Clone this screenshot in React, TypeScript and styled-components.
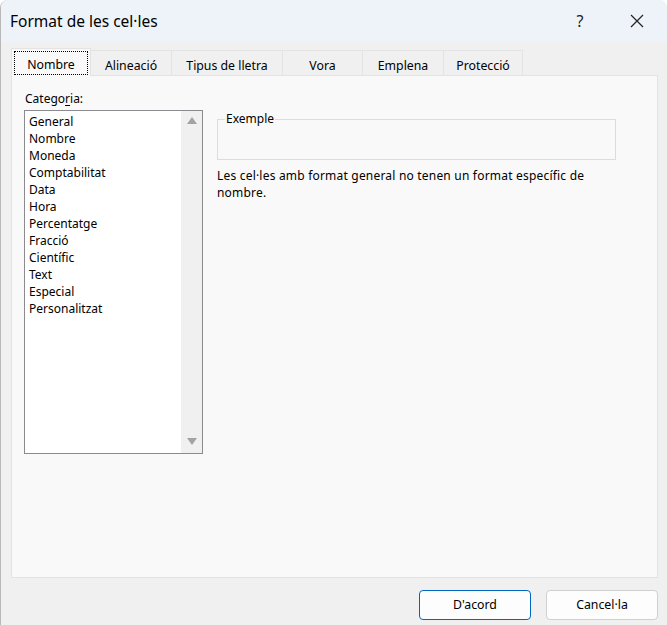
import React from "react";
import styled, { createGlobalStyle } from "styled-components";

const Global = createGlobalStyle`
  html, body { margin: 0; padding: 0; background: #ffffff; }
  * { box-sizing: border-box; }
  #root { width: 667px; height: 625px; }
`;

const FONT = `"Noto Sans", "Open Sans", sans-serif`;

const Window = styled.div`
  width: 667px;
  height: 625px;
  background: #f0f0f0;
  border-top-right-radius: 8px;
  border-top-left-radius: 8px;
  border-left: 1px solid #b8b8b8;
  overflow: hidden;
  display: flex;
  flex-direction: column;
  font-family: ${FONT};
  color: #000;
`;

const TitleBar = styled.div`
  height: 42px;
  flex: none;
  background: #eef3f9;
  display: flex;
  align-items: center;
  padding-left: 9px;
`;

const Title = styled.div`
  font-size: 15.5px;
  flex: 1;
`;

const TitleButton = styled.div<{ $w: number; $gap?: number }>`
  width: ${(p) => p.$w}px;
  margin-left: ${(p) => p.$gap ?? 0}px;
  height: 42px;
  display: flex;
  align-items: center;
  justify-content: center;
  font-size: 16px;
  color: #222;
`;

const Body = styled.div`
  flex: 1;
  display: flex;
  flex-direction: column;
  padding: 6px 9px 0 10px;
`;

const TabStrip = styled.div`
  display: flex;
  align-items: flex-end;
  height: 28px;
  position: relative;
  z-index: 1;
  margin-bottom: -1px;
`;

const Tab = styled.div<{ $w: number; $active?: boolean }>`
  width: ${(p) => p.$w}px;
  height: ${(p) => (p.$active ? 28 : 26)}px;
  margin-left: ${(p) => (p.$active ? 0 : -1)}px;
  border: 1px solid #e3e3e3;
  border-bottom: ${(p) => (p.$active ? "none" : "1px solid #e3e3e3")};
  background: ${(p) => (p.$active ? "#f9f9f9" : "#f0f0f0")};
  display: flex;
  align-items: center;
  justify-content: center;
  font-size: 12.3px;
  padding: ${(p) => (p.$active ? "2px 2px 1px" : "4px 0 0")};
  position: relative;
  z-index: ${(p) => (p.$active ? 2 : 1)};
`;

const Focus = styled.div`
  width: 100%;
  height: 100%;
  border: 1px dotted #000;
  display: flex;
  align-items: center;
  justify-content: center;
  padding-top: 3px;
`;

const Panel = styled.div`
  width: 647px;
  height: 503px;
  background: #f9f9f9;
  border: 1px solid #e3e3e3;
  display: flex;
  padding: 14px 0 0 12px;
  gap: 14px;
`;

const LeftCol = styled.div`
  display: flex;
  flex-direction: column;
  width: 179px;
`;

const Label = styled.div`
  font-size: 12px;
  height: 20px;
  padding-left: 1px;
  u { text-decoration: underline; text-underline-offset: 2px; }
`;

const ListBox = styled.div`
  width: 179px;
  height: 344px;
  border: 1px solid #8a8a8f;
  background: #fff;
  display: flex;
`;

const Items = styled.div`
  flex: 1;
  padding: 2px 0 0 4px;
  display: flex;
  flex-direction: column;
`;

const Item = styled.div`
  font-size: 12px;
  line-height: 17px;
  height: 17px;
`;

const Scroll = styled.div`
  width: 21px;
  background: #f0f0f0;
  display: flex;
  flex-direction: column;
  justify-content: space-between;
  align-items: center;
  padding: 6px 0 8px;
`;

const Arrow = styled.div<{ $down?: boolean }>`
  width: 0;
  height: 0;
  border-left: 5px solid transparent;
  border-right: 5px solid transparent;
  ${(p) =>
    p.$down
      ? "border-top: 7px solid #a3a3a3;"
      : "border-bottom: 7px solid #a3a3a3;"}
`;

const RightCol = styled.div`
  display: flex;
  flex-direction: column;
  padding-top: 22px;
  width: 399px;
`;

const Group = styled.fieldset`
  margin: 0;
  padding: 0;
  height: 48px;
  border: 1px solid #dcdcdc;
  min-width: 0;
`;

const Legend = styled.legend`
  font-size: 12px;
  line-height: 14px;
  margin-left: 7px;
  padding: 0 1px;
`;

const Desc = styled.div`
  margin-top: 7px;
  font-size: 12px;
  line-height: 17px;
  letter-spacing: 0.2px;
  width: 400px;
`;

const Footer = styled.div`
  display: flex;
  justify-content: flex-end;
  gap: 15px;
  padding: 12px 0 0;
`;

const Button = styled.div<{ $primary?: boolean }>`
  width: 112px;
  height: 30px;
  border-radius: 4px;
  border: 1px solid ${(p) => (p.$primary ? "#0067c0" : "#d0d0d0")};
  background: #fdfdfd;
  display: flex;
  align-items: center;
  justify-content: center;
  font-size: 12.3px;
  padding-bottom: 1px;
`;

const items = [
  "General",
  "Nombre",
  "Moneda",
  "Comptabilitat",
  "Data",
  "Hora",
  "Percentatge",
  "Fracció",
  "Científic",
  "Text",
  "Especial",
  "Personalitzat",
];

export default function App() {
  return (
    <>
      <Global />
      <Window>
        <TitleBar>
          <Title>Format de les cel·les</Title>
          <TitleButton $w={40}>?</TitleButton>
          <TitleButton $w={60} $gap={7}>
            <svg width="14" height="14" viewBox="0 0 14 14">
              <path d="M1 1 L13 13 M13 1 L1 13" stroke="#222" strokeWidth="1.2" fill="none" />
            </svg>
          </TitleButton>
        </TitleBar>
        <Body>
          <TabStrip>
            <Tab $w={80} $active>
              <Focus>Nombre</Focus>
            </Tab>
            <Tab $w={82}>Alineació</Tab>
            <Tab $w={112}>Tipus de lletra</Tab>
            <Tab $w={81}>Vora</Tab>
            <Tab $w={82}>Emplena</Tab>
            <Tab $w={80}>Protecció</Tab>
          </TabStrip>
          <Panel>
            <LeftCol>
              <Label>
                Catego<u>r</u>ia:
              </Label>
              <ListBox>
                <Items>
                  {items.map((i) => (
                    <Item key={i}>{i}</Item>
                  ))}
                </Items>
                <Scroll>
                  <Arrow />
                  <Arrow $down />
                </Scroll>
              </ListBox>
            </LeftCol>
            <RightCol>
              <Group>
                <Legend>Exemple</Legend>
              </Group>
              <Desc>
                Les cel·les amb format general no tenen un format específic de nombre.
              </Desc>
            </RightCol>
          </Panel>
          <Footer>
            <Button $primary>D'acord</Button>
            <Button>Cancel·la</Button>
          </Footer>
        </Body>
      </Window>
    </>
  );
}
